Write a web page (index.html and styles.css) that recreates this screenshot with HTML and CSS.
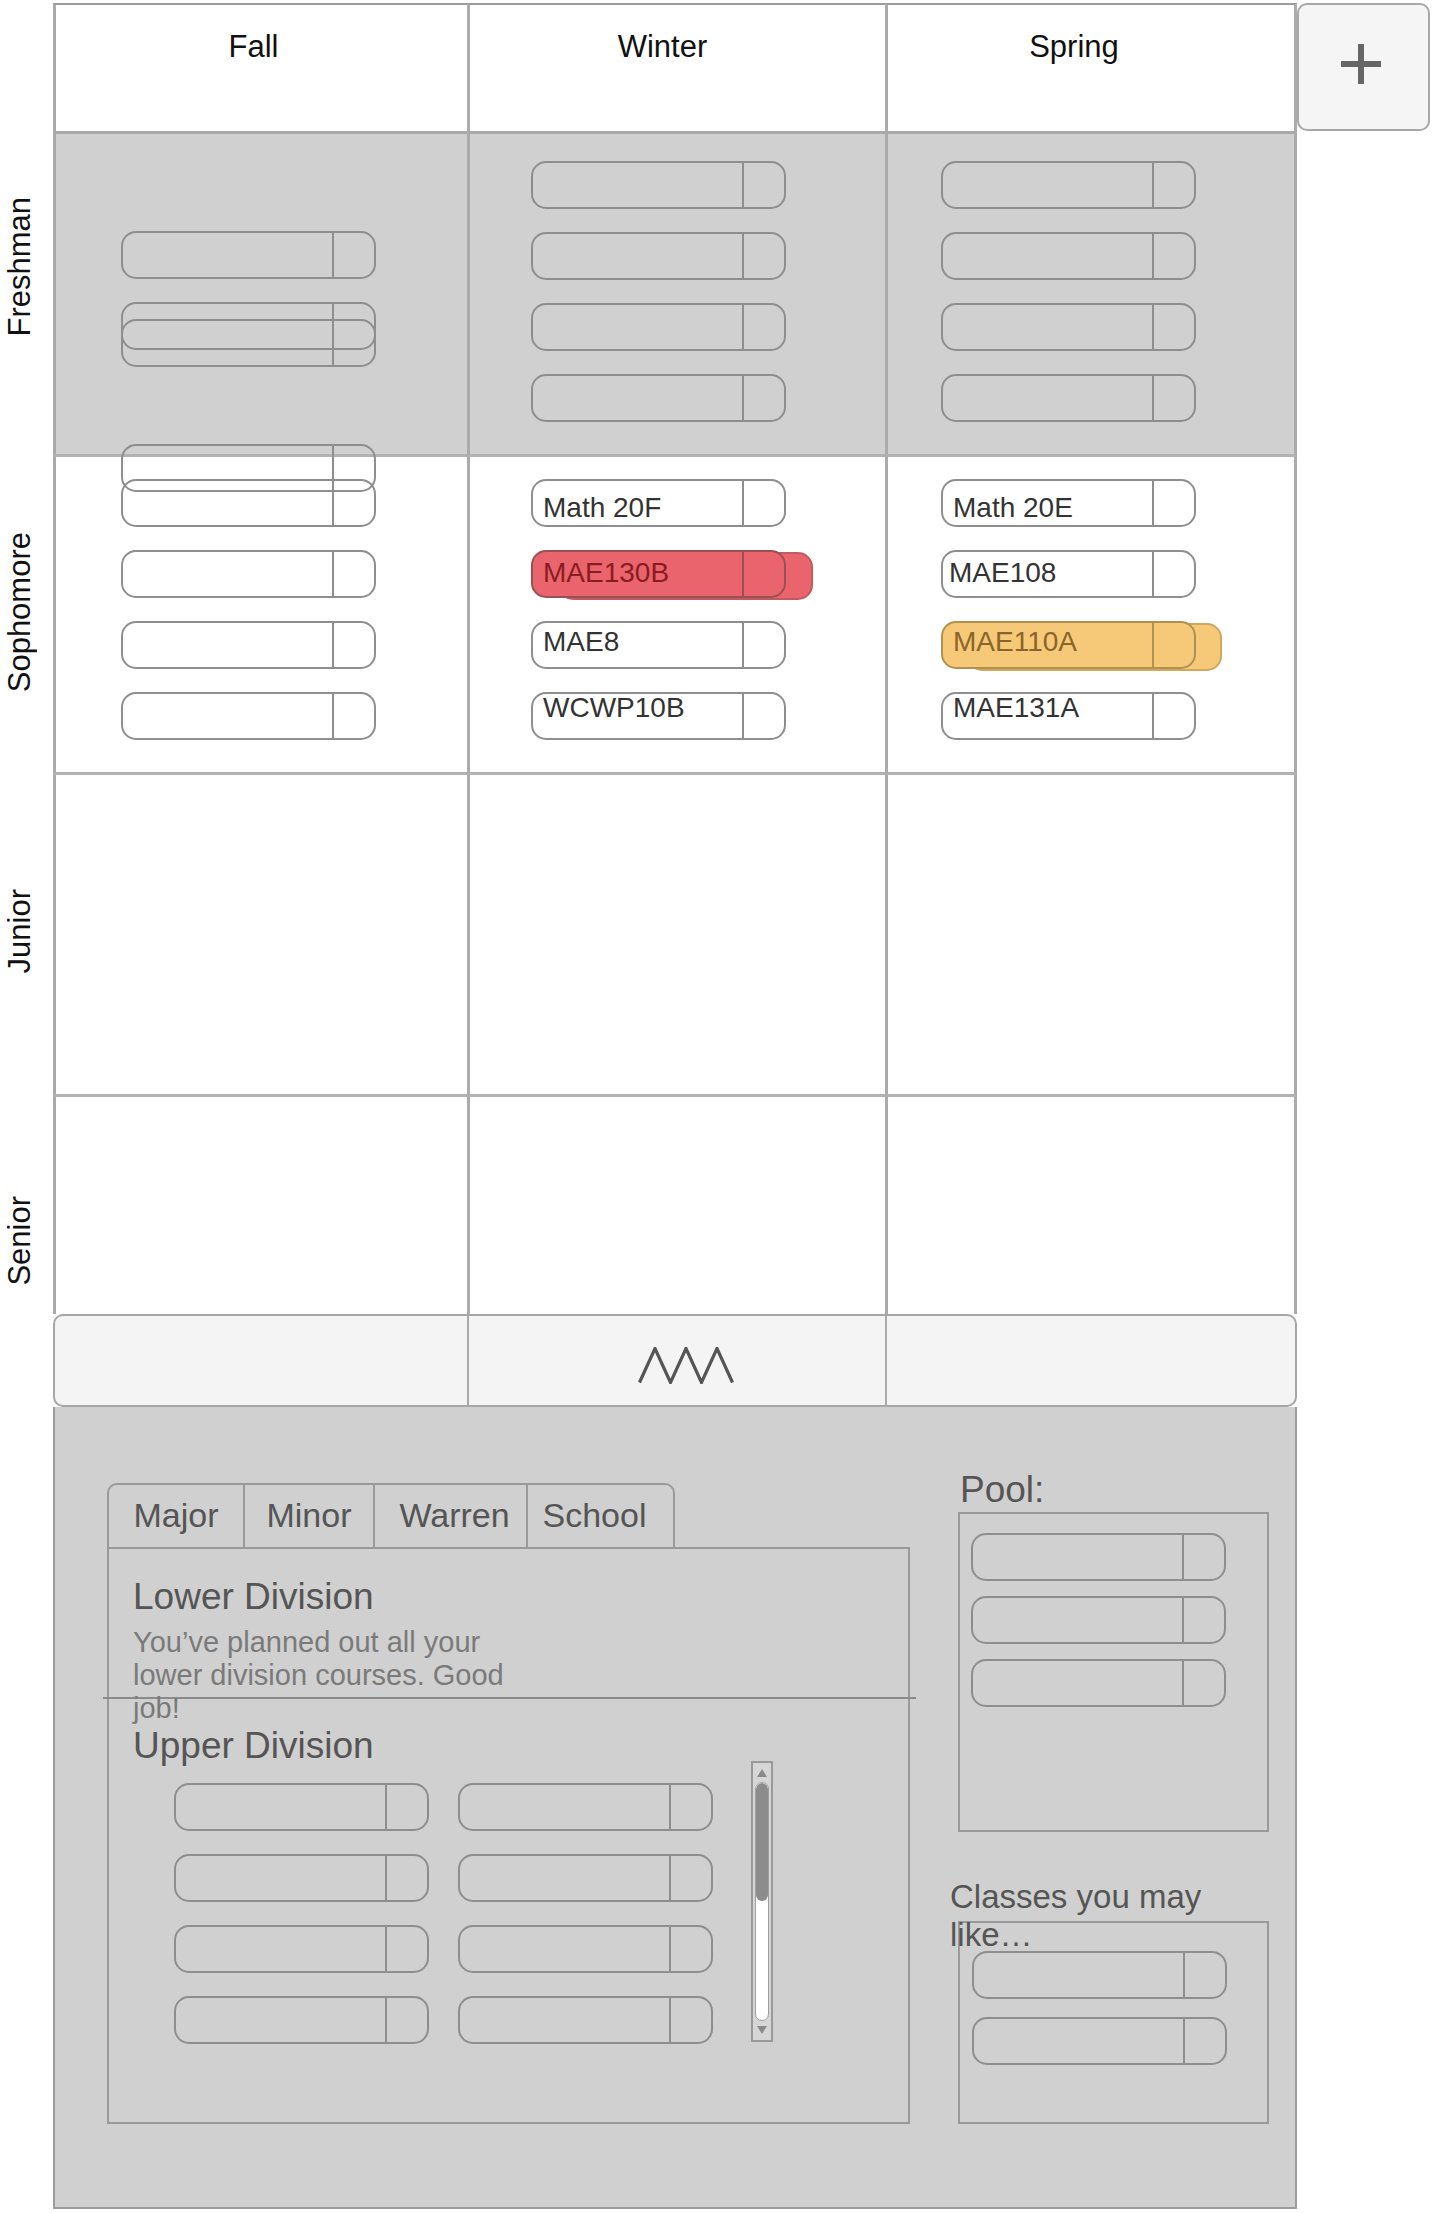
FILE: index.html
```html
<!DOCTYPE html>
<html lang="en">
<head>
<meta charset="utf-8">
<title>Course Planner</title>
<link rel="stylesheet" href="styles.css">
</head>
<body>
<div class="planner">
  <div class="years">
    <div class="year year-fresh"><span>Freshman</span></div>
    <div class="year year-soph"><span>Sophomore</span></div>
    <div class="year year-junior"><span>Junior</span></div>
    <div class="year year-senior"><span>Senior</span></div>
  </div>

  <div class="main">
    <div class="grid">
      <div class="head head-fall">Fall</div>
      <div class="head head-winter">Winter</div>
      <div class="head head-spring">Spring</div>

      <div class="cell shade c-fall fresh-fall">
        <div class="pill"><span class="pill-name"></span><span class="pill-end"></span></div>
        <div class="pill"><span class="pill-name"></span><span class="pill-end"></span></div>
        <div class="pill overlap-a"><span class="pill-name"></span><span class="pill-end"></span></div>
      </div>
      <div class="cell shade c-winter fresh-term">
        <div class="pill"><span class="pill-name"></span><span class="pill-end"></span></div>
        <div class="pill"><span class="pill-name"></span><span class="pill-end"></span></div>
        <div class="pill"><span class="pill-name"></span><span class="pill-end"></span></div>
        <div class="pill"><span class="pill-name"></span><span class="pill-end"></span></div>
      </div>
      <div class="cell shade c-spring fresh-term">
        <div class="pill"><span class="pill-name"></span><span class="pill-end"></span></div>
        <div class="pill"><span class="pill-name"></span><span class="pill-end"></span></div>
        <div class="pill"><span class="pill-name"></span><span class="pill-end"></span></div>
        <div class="pill"><span class="pill-name"></span><span class="pill-end"></span></div>
      </div>

      <div class="cell c-fall soph-fall">
        <div class="pill rise-a"><span class="pill-name"></span><span class="pill-end"></span></div>
        <div class="pill rise-b"><span class="pill-name"></span><span class="pill-end"></span></div>
        <div class="pill"><span class="pill-name"></span><span class="pill-end"></span></div>
        <div class="pill"><span class="pill-name"></span><span class="pill-end"></span></div>
        <div class="pill"><span class="pill-name"></span><span class="pill-end"></span></div>
      </div>
      <div class="cell c-winter soph-term">
        <div class="pill"><span class="pill-name name-1">Math 20F</span><span class="pill-end"></span></div>
        <div class="pill conflict"><span class="pill-name name-2">MAE130B</span><span class="pill-end"></span></div>
        <div class="pill"><span class="pill-name name-3">MAE8</span><span class="pill-end"></span></div>
        <div class="pill"><span class="pill-name name-4">WCWP10B</span><span class="pill-end"></span></div>
      </div>
      <div class="cell c-spring soph-term">
        <div class="pill"><span class="pill-name name-1">Math 20E</span><span class="pill-end"></span></div>
        <div class="pill"><span class="pill-name name-2 name-tight">MAE108</span><span class="pill-end"></span></div>
        <div class="pill warn"><span class="pill-name name-3">MAE110A</span><span class="pill-end"></span></div>
        <div class="pill"><span class="pill-name name-4">MAE131A</span><span class="pill-end"></span></div>
      </div>

      <div class="cell c-fall"></div>
      <div class="cell c-winter"></div>
      <div class="cell c-spring"></div>

      <div class="cell c-fall last-row"></div>
      <div class="cell c-winter last-row"></div>
      <div class="cell c-spring last-row"></div>
    </div>

    <div class="footer-bar">
      <div class="fcol"></div>
      <div class="fcol fcol-mid">
        <svg class="expand-icon" width="96" height="37" viewBox="0 0 96 37" aria-hidden="true">
          <polyline points="1.5,35.5 17,1.5 32.5,35.5 48,1.5 63.5,35.5 79,1.5 94.5,35.5" fill="none" stroke="#555" stroke-width="3.2" stroke-linejoin="miter"/>
        </svg>
      </div>
      <div class="fcol"></div>
    </div>

    <div class="panel">
      <div class="tabs-col">
        <div class="tabs">
          <div class="tab tab-major">Major</div>
          <div class="tab tab-minor">Minor</div>
          <div class="tab tab-warren">Warren</div>
          <div class="tab tab-school">School</div>
        </div>
        <div class="tab-body">
          <div class="lower">
            <h2 class="sec-title">Lower Division</h2>
            <p class="sec-note">You’ve planned out all your lower division courses. Good job!</p>
          </div>
          <h2 class="sec-title upper-title">Upper Division</h2>
          <div class="upper-body">
            <div class="course-grid">
              <div class="pill"><span class="pill-name"></span><span class="pill-end"></span></div>
              <div class="pill"><span class="pill-name"></span><span class="pill-end"></span></div>
              <div class="pill"><span class="pill-name"></span><span class="pill-end"></span></div>
              <div class="pill"><span class="pill-name"></span><span class="pill-end"></span></div>
              <div class="pill"><span class="pill-name"></span><span class="pill-end"></span></div>
              <div class="pill"><span class="pill-name"></span><span class="pill-end"></span></div>
              <div class="pill"><span class="pill-name"></span><span class="pill-end"></span></div>
              <div class="pill"><span class="pill-name"></span><span class="pill-end"></span></div>
            </div>
            <div class="scrollbar">
              <div class="sb-arrow sb-up"></div>
              <div class="sb-track"><div class="sb-thumb"></div></div>
              <div class="sb-arrow sb-down"></div>
            </div>
          </div>
        </div>
      </div>

      <div class="side-col">
        <div class="side-label pool-label">Pool:</div>
        <div class="pool-box">
          <div class="pill"><span class="pill-name"></span><span class="pill-end"></span></div>
          <div class="pill"><span class="pill-name"></span><span class="pill-end"></span></div>
          <div class="pill"><span class="pill-name"></span><span class="pill-end"></span></div>
        </div>
        <div class="side-label classes-label">Classes you may like…</div>
        <div class="classes-box">
          <div class="pill"><span class="pill-name"></span><span class="pill-end"></span></div>
          <div class="pill"><span class="pill-name"></span><span class="pill-end"></span></div>
        </div>
      </div>
    </div>
  </div>

  <div class="add-btn">
    <svg width="40" height="40" viewBox="0 0 40 40" aria-hidden="true">
      <rect x="0" y="17" width="40" height="6" fill="#666"/>
      <rect x="17" y="0" width="6" height="40" fill="#666"/>
    </svg>
  </div>
</div>
</body>
</html>
```

FILE: styles.css
```css
* {
  box-sizing: border-box;
}

html,
body {
  margin: 0;
  padding: 0;
  background: #ffffff;
}

body {
  font-family: "Liberation Sans", Arial, Helvetica, sans-serif;
  width: 1444px;
  min-height: 2213px;
}

.planner {
  display: flex;
  align-items: flex-start;
  padding-top: 3px;
}

/* ---------- year labels ---------- */
.years {
  width: 53px;
  flex: none;
  padding-top: 131px;
}

.year {
  display: flex;
  justify-content: flex-start;
  align-items: center;
  padding-left: 2px;
  font-size: 31px;
  color: #111;
}

.year span {
  writing-mode: vertical-rl;
  transform: rotate(180deg);
  line-height: normal;
  white-space: nowrap;
}

.year-fresh { height: 323px; padding-bottom: 57px; }
.year-soph { height: 318px; padding-bottom: 8px; }
.year-junior { height: 322px; padding-bottom: 10px; }
.year-senior { height: 310px; padding-bottom: 22px; }

/* ---------- main grid ---------- */
.main {
  width: 1244px;
  flex: none;
}

.grid {
  display: grid;
  grid-template-columns: 414px 418px 412px;
  grid-template-rows: 131px 323px 318px 322px 217px;
}

.head {
  background: #fff;
  border-top: 2px solid #9a9a9a;
  border-left: 3px solid #ababab;
  border-bottom: 3px solid #a9a9a9;
  text-align: center;
  font-size: 31px;
  line-height: normal;
  color: #111;
  padding-top: 24px;
}

.head-fall { padding-right: 16px; }
.head-winter { padding-right: 30px; }
.head-spring { padding-right: 34px; border-right: 3px solid #ababab; }

.cell {
  background: #fff;
  border-left: 3px solid #ababab;
  border-bottom: 3px solid #b2b2b2;
  display: flex;
  flex-direction: column;
  align-items: flex-start;
  gap: 23px;
}

.cell.shade { background: #d0d0d0; }
.cell.last-row { border-bottom: none; }

.c-fall { padding-left: 65px; }
.c-winter { padding-left: 61px; }
.c-spring { padding-left: 53px; border-right: 3px solid #ababab; }

.fresh-fall { padding-top: 97px; }
.fresh-term { padding-top: 27px; }
.soph-fall { padding-top: 0; }
.soph-term { padding-top: 22px; }

.overlap-a { margin-top: -54px; }
.rise-a { margin-top: -13px; }
.rise-b { margin-top: -36px; }

/* ---------- course pill ---------- */
.pill {
  display: flex;
  flex: none;
  width: 255px;
  height: 48px;
  border: 2px solid #8e8e8e;
  border-radius: 15px;
}

.pill-name {
  flex: 1;
  font-size: 28px;
  line-height: 28px;
  color: #333;
  padding-left: 10px;
  white-space: nowrap;
}

.pill-end {
  flex: 0 0 42px;
  border-left: 2px solid #8e8e8e;
}

.name-1 { padding-top: 13px; }
.name-2 { padding-top: 7px; }
.name-3 { padding-top: 5px; }
.name-4 { padding-top: 0; }
.name-tight { padding-left: 6px; }

.pill.conflict {
  background: #e9646c;
  border-color: #9a5052;
  box-shadow: 27px 2px 0 -2px #e9646c, 27px 2px 0 0 #c25a60;
}

.pill.conflict .pill-name { color: #8a1c20; }
.pill.conflict .pill-end { border-left-color: #9a5052; }

.pill.warn {
  background: #f6c978;
  border-color: #b1914f;
  box-shadow: 26px 2px 0 -2px #f6c978, 26px 2px 0 0 #cfa75d;
}

.pill.warn .pill-name { color: #8a6428; }
.pill.warn .pill-end { border-left-color: #b1914f; }

/* ---------- expand bar ---------- */
.footer-bar {
  display: grid;
  grid-template-columns: 412px 418px 410px;
  height: 93px;
  border: 2px solid #a6a6a6;
  border-radius: 10px;
  background: #f4f4f4;
}

.fcol + .fcol {
  border-left: 2px solid #a9a9a9;
}

.fcol-mid {
  display: flex;
  justify-content: center;
  align-items: center;
  padding-left: 18px;
  padding-top: 10px;
}

.expand-icon {
  display: block;
}

/* ---------- bottom panel ---------- */
.panel {
  display: flex;
  align-items: flex-start;
  height: 802px;
  border: 2px solid #9c9c9c;
  border-top: none;
  background: #d0d0d0;
  padding: 63px 26px 0 52px;
}

.tabs-col {
  width: 803px;
  flex: none;
  margin-top: 13px;
}

.tabs {
  display: flex;
  height: 64px;
}

.tab {
  border-top: 2px solid #999;
  border-left: 2px solid #999;
  font-size: 34px;
  line-height: normal;
  color: #555;
  text-align: center;
  padding-top: 11px;
}

.tab-major { width: 136px; border-top-left-radius: 10px; }
.tab-minor { width: 130px; }
.tab-warren { width: 153px; padding-left: 8px; }
.tab-school { width: 149px; border-right: 2px solid #999; border-top-right-radius: 10px; padding-right: 12px; }

.tab-body {
  height: 577px;
  border: 2px solid #999;
}

.lower {
  height: 150px;
  margin: 0 -8px 0 -6px;
  border-bottom: 2px solid #8a8a8a;
  padding: 27px 0 0 30px;
}

.sec-title {
  margin: 0;
  font-size: 37px;
  font-weight: normal;
  line-height: 41px;
  color: #555;
}

.sec-note {
  width: 400px;
  margin: 9px 0 0;
  font-size: 29px;
  line-height: 33px;
  color: #7a7a7a;
}

.upper-title {
  margin-top: 26px;
  padding-left: 24px;
}

.upper-body {
  display: flex;
  align-items: flex-start;
  margin-top: -5px;
  padding-left: 65px;
}

.course-grid {
  display: grid;
  grid-template-columns: 255px 255px;
  column-gap: 29px;
  row-gap: 23px;
  margin-top: 22px;
}

.scrollbar {
  width: 22px;
  height: 281px;
  flex: none;
  margin-left: 38px;
  border: 2px solid #9a9a9a;
  background: #d6d6d6;
  display: flex;
  flex-direction: column;
  align-items: center;
  padding: 2px 0;
}

.sb-arrow {
  width: 0;
  height: 0;
  border-left: 5px solid transparent;
  border-right: 5px solid transparent;
  flex: none;
}

.sb-up { border-bottom: 8px solid #8a8a8a; margin: 4px 0 5px; }
.sb-down { border-top: 8px solid #8a8a8a; margin: 5px 0 4px; }

.sb-track {
  flex: 1;
  width: 14px;
  background: #fff;
  border: 1px solid #a0a0a0;
  border-radius: 7px;
  overflow: hidden;
}

.sb-thumb {
  height: 118px;
  background: #8c8c8c;
  border-radius: 7px;
}

.side-col {
  width: 311px;
  flex: none;
  margin-left: 48px;
}

.side-label {
  font-size: 34px;
  line-height: normal;
  color: #555;
}

.pool-label {
  font-size: 37px;
  line-height: 39px;
  padding-left: 2px;
}

.pool-box {
  margin-top: 3px;
  height: 320px;
  border: 2px solid #999;
  padding: 19px 0 0 11px;
  display: flex;
  flex-direction: column;
  gap: 15px;
}

.classes-label {
  margin-top: 46px;
  margin-left: -8px;
  font-size: 33px;
}

.classes-box {
  margin-top: -33px;
  height: 203px;
  border: 2px solid #999;
  padding: 28px 0 0 12px;
  display: flex;
  flex-direction: column;
  gap: 18px;
}

/* ---------- add button ---------- */
.add-btn {
  width: 133px;
  height: 128px;
  flex: none;
  border: 2px solid #a8a8a8;
  border-radius: 10px;
  background: #f5f5f5;
  display: flex;
  align-items: center;
  justify-content: center;
  padding: 0 5px 7px 0;
}

.add-btn svg {
  display: block;
}
```
